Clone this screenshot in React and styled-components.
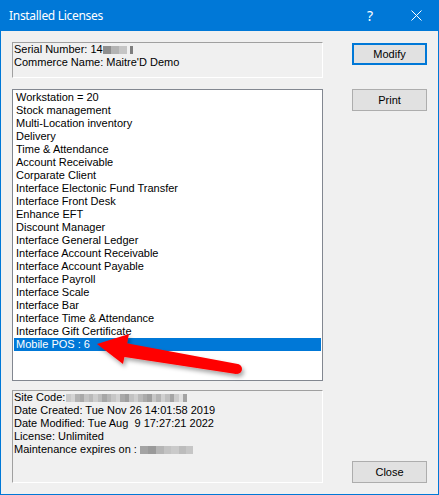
import React from "react";
import styled, { createGlobalStyle } from "styled-components";

const Global = createGlobalStyle`
  html, body { margin: 0; padding: 0; background: #f0f0f0; }
  * { box-sizing: border-box; }
`;

const Window = styled.div`
  position: relative;
  width: 439px;
  height: 495px;
  background: #f0f0f0;
  border: 1px solid #0078d7;
  border-top: none;
  display: flex;
  flex-direction: column;
  font-family: "Liberation Sans", Arial, sans-serif;
  font-size: 11px;
  color: #000;
  overflow: hidden;
`;

const TitleBar = styled.div`
  height: 31px;
  margin: 0 -1px;
  background: #0078d7;
  display: flex;
  align-items: center;
  padding-left: 9px;
  color: #fff;
  font-family: "Noto Sans", sans-serif;
  font-size: 12px;
  flex-shrink: 0;
`;

const Title = styled.div`
  flex: 1;
  padding-bottom: 1px;
  letter-spacing: -0.3px;
`;

const TitleBtn = styled.div`
  width: 46px;
  height: 31px;
  display: flex;
  align-items: center;
  justify-content: center;
  font-size: 14px;
`;

const Body = styled.div`
  flex: 1;
  display: flex;
  padding: 11px 11px 11px 11px;
`;

const LeftCol = styled.div`
  width: 311px;
  display: flex;
  flex-direction: column;
`;

const StaticPanel = styled.div`
  height: ${(p) => p.$h}px;
  margin-top: ${(p) => p.$mt || 0}px;
  border-top: 1px solid #a0a0a0;
  border-left: 1px solid #a0a0a0;
  border-right: 1px solid #ffffff;
  border-bottom: 1px solid #ffffff;
  padding: 0 0 0 1px;
  line-height: 13px;
  white-space: pre;
`;

const Line = styled.div`
  height: 13px;
  display: flex;
  align-items: center;
`;

const ListBox = styled.div`
  position: relative;
  height: 292px;
  margin-top: 11px;
  background: #fff;
  border: 1px solid #828790;
  padding: 1px 0 0 1px;
  line-height: 13px;
`;

const ListItem = styled.div`
  height: 13px;
  padding-left: 2px;
  white-space: pre;
  background: ${(p) => (p.$sel ? "#0078d7" : "transparent")};
  color: ${(p) => (p.$sel ? "#fff" : "#000")};
  width: 307px;
`;

const RightCol = styled.div`
  flex: 1;
  display: flex;
  flex-direction: column;
  align-items: flex-end;
  padding-top: 1px;
`;

const Button = styled.div`
  width: 75px;
  height: 22px;
  margin-top: ${(p) => (p.$auto ? "auto" : `${p.$mt || 0}px`)};
  background: #e1e1e1;
  border: ${(p) => (p.$focus ? "2px solid #0078d7" : "1px solid #adadad")};
  display: flex;
  align-items: center;
  justify-content: center;
  font-family: "Liberation Sans", Arial, sans-serif;
  font-size: 11px;
  color: #000;
`;

const Blur = styled.span`
  display: inline-flex;
  height: 8px;
  margin-left: ${(p) => p.$ml || 0}px;
  align-self: center;
  margin-top: 1px;
`;

const Chip = styled.span`
  display: block;
  height: 8px;
`;

const ArrowSvg = styled.svg`
  position: absolute;
  left: 0;
  top: 0;
  pointer-events: none;
`;

function Blocks({ ml, cols }) {
  return (
    <Blur $ml={ml}>
      {cols.map(([w, c], i) => (
        <Chip key={i} style={{ width: w, background: c }} />
      ))}
    </Blur>
  );
}

const items = [
  "Workstation = 20",
  "Stock management",
  "Multi-Location inventory",
  "Delivery",
  "Time & Attendance",
  "Account Receivable",
  "Corparate Client",
  "Interface Electonic Fund Transfer",
  "Interface Front Desk",
  "Enhance EFT",
  "Discount Manager",
  "Interface General Ledger",
  "Interface Account Receivable",
  "Interface Account Payable",
  "Interface Payroll",
  "Interface Scale",
  "Interface Bar",
  "Interface Time & Attendance",
  "Interface Gift Certificate",
  "Mobile POS : 6",
];

const siteCols = [
  [5, "#c9c9c9"], [4, "#d4d4d4"], [5, "#b3b3b3"], [4, "#a9a9a9"], [5, "#c4c4c4"],
  [4, "#b9b9b9"], [5, "#cdcdcd"], [4, "#bdbdbd"], [5, "#a6a6a6"], [4, "#b6b6b6"],
  [5, "#c6c6c6"], [4, "#d2d2d2"], [5, "#a9a9a9"], [4, "#9e9e9e"], [5, "#c2c2c2"],
  [4, "#cfcfcf"], [5, "#bababa"], [4, "#ababab"], [5, "#9f9f9f"], [4, "#c7c7c7"],
  [5, "#b4b4b4"], [4, "#d0d0d0"], [5, "#bfbfbf"], [4, "#a5a5a5"], [5, "#cccccc"],
  [4, "#e0e0e0"], [4, "#a3a3a3"],
];

const maintCols = [
  [8, "#a3a3a3"], [8, "#9a9a9a"], [8, "#b5b5b5"], [7, "#c3c3c3"], [8, "#cacaca"],
  [7, "#bcbcbc"], [7, "#c6c6c6"],
];

const serialCols = [
  [8, "#8e8e8e"], [8, "#b3b3b3"], [8, "#c5c5c5"], [3, "#f0f0f0"], [3, "#7e7e7e"],
];

export default function App() {
  return (
    <>
      <Global />
      <Window>
        <TitleBar>
          <Title>Installed Licenses</Title>
          <TitleBtn>?</TitleBtn>
          <TitleBtn>
            <svg width="11" height="11" viewBox="0 0 11 11">
              <path d="M0.5 0.5 L10.5 10.5 M10.5 0.5 L0.5 10.5" stroke="#fff" strokeWidth="1" />
            </svg>
          </TitleBtn>
        </TitleBar>
        <Body>
          <LeftCol>
            <StaticPanel $h={36}>
              <Line>
                Serial Number: 14
                <Blocks ml={0} cols={serialCols} />
              </Line>
              <Line>Commerce Name: Maitre'D Demo</Line>
            </StaticPanel>
            <ListBox>
              {items.map((t, i) => (
                <ListItem key={i} $sel={i === items.length - 1}>
                  {t}
                </ListItem>
              ))}
            </ListBox>
            <StaticPanel $h={93} $mt={9}>
              <Line>
                Site Code:
                <Blocks ml={1} cols={siteCols} />
              </Line>
              <Line>Date Created: Tue Nov 26 14:01:58 2019</Line>
              <Line>Date Modified: Tue Aug  9 17:27:21 2022</Line>
              <Line>License: Unlimited</Line>
              <Line>
                Maintenance expires on :
                <Blocks ml={3} cols={maintCols} />
              </Line>
            </StaticPanel>
          </LeftCol>
          <RightCol>
            <Button $focus>Modify</Button>
            <Button $mt={24}>Print</Button>
            <Button $auto>Close</Button>
          </RightCol>
        </Body>
        <ArrowSvg width="439" height="495" viewBox="0 0 439 495">
          <defs>
            <filter id="sh" x="-20%" y="-40%" width="140%" height="180%">
              <feDropShadow dx="2" dy="3" stdDeviation="2" floodColor="#000" floodOpacity="0.35" />
            </filter>
          </defs>
          <g filter="url(#sh)" fill="#ff0000">
            <polygon points="117,356 119,342 236.8,364 235.2,374" />
            <circle cx="236" cy="369" r="5" />
            <polygon points="96,344 128,334 122,364" />
          </g>
        </ArrowSvg>
      </Window>
    </>
  );
}
